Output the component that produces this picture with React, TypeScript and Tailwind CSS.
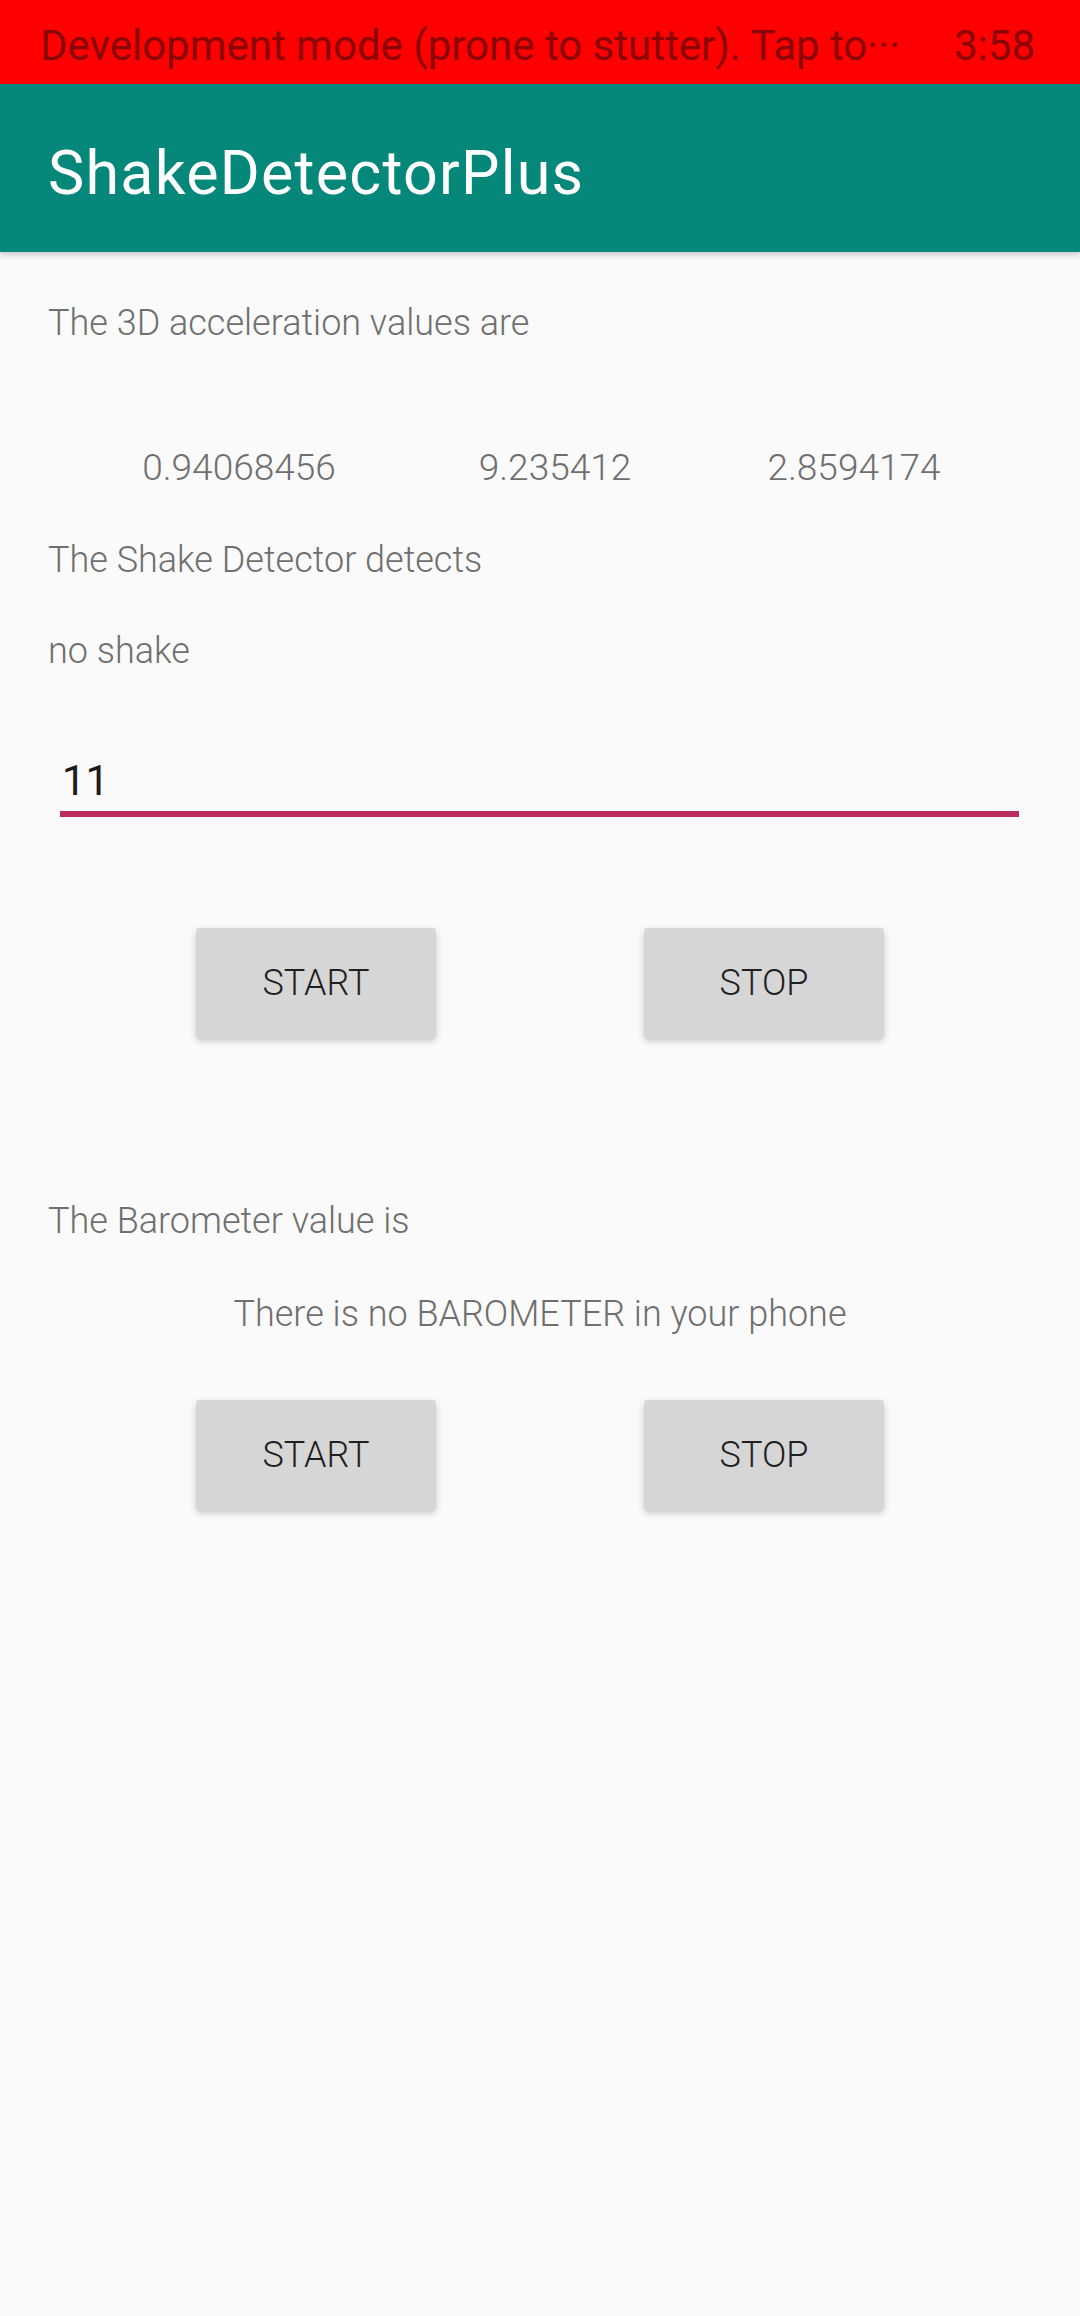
const bodyFont = { fontFamily: "Roboto, 'Liberation Sans', sans-serif" };

const GrayButton = ({ label }: { label: string }) => (
  <button className="w-[240px] h-[110px] bg-[#d6d6d6] text-[36px] leading-none text-[#1f1f1f] shadow-[0_3px_7px_rgba(0,0,0,0.2)] rounded-[3px]">
    {label}
  </button>
);

const App = () => {
  return (
    <div className="min-h-[2316px] w-[1080px] bg-[#fafafa]" style={bodyFont}>
      {/* dev-mode status bar */}
      <div className="h-[84px] bg-[#ff0000] flex justify-between pl-[40px] pr-[45px] pt-[25px] text-[42px] leading-none text-[#8a0606]">
        <span>Development mode (prone to stutter). Tap to···</span>
        <span>3:58</span>
      </div>

      {/* toolbar */}
      <div className="relative h-[168px] bg-[#05877a] pl-[48px] pt-[59px] shadow-[0_3px_6px_rgba(0,0,0,0.2)]">
        <h1 className="text-[61px] leading-none tracking-[0.02em] text-white font-normal">ShakeDetectorPlus</h1>
      </div>

      <main className="pl-[48px] text-[36px] leading-none font-light text-[#6f6f6f]">
        <p className="mt-[53px]">The 3D acceleration values are</p>

        <div className="flex -ml-[48px] pl-[99px] mt-[108px] text-[37px]">
          <span className="w-[280px] text-center">0.94068456</span>
          <span className="w-[280px] text-center ml-[36px]">9.235412</span>
          <span className="w-[280px] text-center ml-[19px]">2.8594174</span>
        </div>

        <p className="mt-[56px]">The Shake Detector detects</p>
        <p className="mt-[55px]">no shake</p>

        {/* threshold input */}
        <div className="mt-[91px] ml-[12px] w-[959px]">
          <div className="pl-[2px] text-[42px] font-normal text-[#1c1c1c]">11</div>
          <div className="mt-[9px] h-[6px] bg-[#bb2d5f]" />
        </div>

        <div className="-ml-[48px] mt-[111px] flex justify-center gap-[208px]">
          <GrayButton label="START" />
          <GrayButton label="STOP" />
        </div>

        <p className="mt-[165px]">The Barometer value is</p>
        <p className="-ml-[48px] mt-[57px] text-center">There is no BAROMETER in your phone</p>

        <div className="-ml-[48px] mt-[68px] flex justify-center gap-[208px]">
          <GrayButton label="START" />
          <GrayButton label="STOP" />
        </div>
      </main>
    </div>
  );
};

export default App;
